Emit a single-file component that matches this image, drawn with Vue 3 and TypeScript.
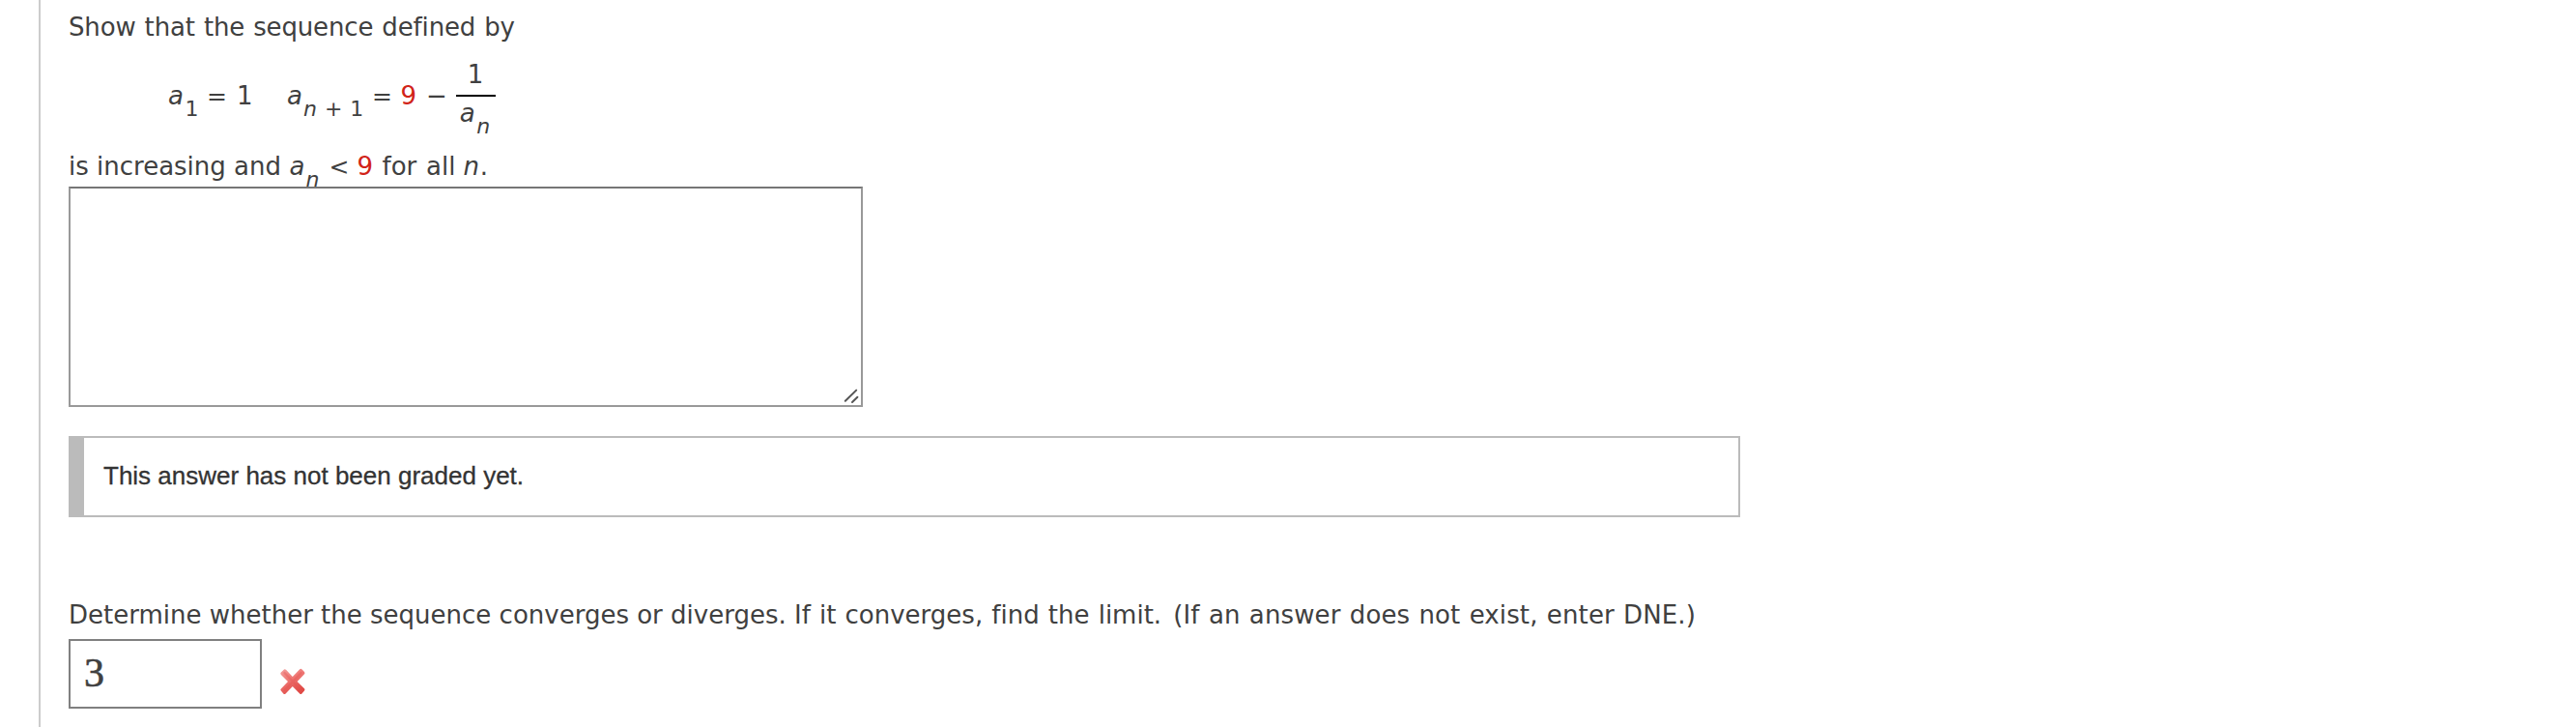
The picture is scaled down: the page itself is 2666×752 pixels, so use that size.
<script setup lang="ts">
import { ref } from 'vue'

interface Token {
  text: string
  width: number
  kind?: string
}

const recurrence: Token[] = [
  { text: 'a', width: 17.6, kind: 'variable' },
  { text: '1', width: 22.4, kind: 'subscript' },
  { text: '=', width: 31, kind: 'operator' },
  { text: '1', width: 52 },
  { text: 'a', width: 17, kind: 'variable' },
  { text: 'n', width: 22, kind: 'subscript variable' },
  { text: '+', width: 26.3, kind: 'subscript' },
  { text: '1', width: 22.7, kind: 'subscript' },
  { text: '=', width: 29.6, kind: 'operator' },
  { text: '9', width: 26.4, kind: 'value' },
  { text: '−', width: 31 },
]

const bound: Token[] = [
  { text: 'is increasing and', width: 228.5, kind: 'and' },
  { text: 'a', width: 17, kind: 'variable' },
  { text: 'n', width: 24, kind: 'subscript variable' },
  { text: '<', width: 29, kind: 'operator' },
  { text: '9', width: 26, kind: 'value' },
  { text: 'for', width: 45.5 },
  { text: 'all', width: 38.5 },
  { text: 'n', width: 17.3, kind: 'variable' },
  { text: '.', width: 10 },
]

const proof = ref('')
const limit = ref('3')
</script>

<template>
  <main class="question">
    <p class="line intro">Show that the sequence defined by</p>

    <div class="formula">
      <div class="line expression">
        <span v-for="(t, i) in recurrence" :key="i" class="token" :class="t.kind" :style="{ width: t.width + 'px' }">{{ t.text }}</span>
      </div>
      <div class="fraction">
        <div class="line numerator">1</div>
        <div class="line denominator">
          <span class="token variable base">a</span><span class="token subscript variable">n</span>
        </div>
      </div>
    </div>

    <div class="line bound">
      <span v-for="(t, i) in bound" :key="i" class="token" :class="t.kind" :style="{ width: t.width + 'px' }">{{ t.text }}</span>
    </div>

    <div class="essay">
      <textarea v-model="proof" class="essay-input" aria-label="Proof"></textarea>
      <svg class="grip" width="16" height="16" viewBox="0 0 16 16" aria-hidden="true">
        <path d="M1.8 12.8 L13.2 1.6 M9 14 L14.4 8.8" />
      </svg>
    </div>

    <div class="notice"><span>This answer has not been graded yet.</span></div>

    <p class="line prompt">Determine whether the sequence converges or diverges. <span class="find">If it converges, find the limit. </span><span class="hint">(If an answer does not exist, enter DNE.)</span></p>

    <div class="answer">
      <input v-model="limit" class="answer-input" aria-label="Limit" />
      <svg class="wrong" width="28" height="28" viewBox="0 0 28 28" role="img" aria-label="Incorrect">
        <defs>
          <linearGradient id="cross" x1="0" y1="0" x2="0.5" y2="1">
            <stop offset="0" stop-color="#f3a09e" />
            <stop offset="0.5" stop-color="#ee7673" />
            <stop offset="1" stop-color="#e04a46" />
          </linearGradient>
        </defs>
        <path
          d="M5 1.4 Q6 .8 7 1.8 L13.8 9 L21 1.4 Q22.4 .2 23.6 1.5 L26 4 Q27 5.2 26 6.2 L18.6 14 L26 21.3 Q27 22.4 26 23.5 L23.4 26.5 Q22.4 27.6 21.2 26.5 L13.8 19 L6.6 26.5 Q5.4 27.6 4.3 26.4 L1.8 23.6 Q.8 22.5 1.8 21.4 L9 14 L1.7 6.8 Q.8 5.7 1.8 4.6 Z"
          fill="url(#cross)"
        />
        <path d="M5.5 5 L22.5 22.8 M22.5 5 L5.5 22.8" stroke="#e5524f" stroke-width="2.4" stroke-linecap="round" opacity=".35" />
      </svg>
    </div>
  </main>
</template>

<style>
body {
  margin: 0;
  background: #fff;
}
</style>

<style scoped>
.question {
  box-sizing: border-box;
  height: 752px;
  margin-left: 40px;
  padding: 12px 0 0 29px;
  overflow: hidden;
  border-left: 2px solid #ccc;
  color: #404040;
  font-family: Verdana, 'DejaVu Sans', sans-serif;
  font-size: 26px;
  font-variant-ligatures: none;
}

.line {
  height: 32px;
  margin: 0;
  line-height: 32px;
  white-space: nowrap;
}

.intro {
  letter-spacing: -0.14px;
  word-spacing: 0.9px;
}

.formula {
  display: flex;
  height: 95px;
  margin-left: 103px;
  padding-top: 17px;
  box-sizing: border-box;
}

.expression {
  display: flex;
  align-items: baseline;
  padding-top: 22px;
}

.token {
  display: block;
  flex: none;
}

.variable {
  font-style: oblique;
}

.subscript {
  font-size: 22px;
  transform: translateY(12px);
}

.operator {
  font-size: 25px;
}

.value {
  color: #d12319;
}

.fraction {
  width: 41px;
}

.numerator {
  padding-left: 11.8px;
}

.denominator {
  display: flex;
  align-items: baseline;
  margin-top: 5px;
  padding-left: 3.8px;
  border-top: 2px solid #000;
  line-height: 34px;
}

.denominator .base {
  width: 17.4px;
}

.bound {
  display: flex;
  align-items: baseline;
  margin-top: 17px;
}

.essay {
  position: relative;
  width: 822px;
  height: 228px;
  margin-top: 5px;
}

.essay-input {
  display: block;
  box-sizing: border-box;
  width: 100%;
  height: 100%;
  border: 2px solid #999;
  border-top-color: #767676;
  border-radius: 0;
  outline: none;
  background: #fff;
  resize: none;
}

.grip {
  position: absolute;
  right: 4px;
  bottom: 3px;
  fill: none;
  stroke: #555;
  stroke-width: 2;
  stroke-linecap: round;
}

.notice {
  display: flex;
  align-items: center;
  box-sizing: border-box;
  width: 1730px;
  height: 84px;
  margin-top: 30px;
  padding: 0 0 2px 20px;
  border: 2px solid #bbb;
  border-left-width: 16px;
  color: #333;
  font-family: Helvetica, 'Liberation Sans', sans-serif;
  font-size: 26px;
  -webkit-text-stroke: 0.3px #333;
}

.prompt {
  margin-top: 85px;
}

.find {
  word-spacing: 0.9px;
}

.hint {
  margin-left: 3px;
  letter-spacing: 0.12px;
  word-spacing: 0.9px;
}

.answer {
  display: flex;
  align-items: flex-start;
  gap: 18px;
  margin-top: 9px;
}

.answer-input {
  box-sizing: border-box;
  width: 200px;
  height: 72px;
  padding: 0 0 2px 14px;
  border: 2px solid #808080;
  border-radius: 0;
  outline: none;
  background: #fff;
  color: #404040;
  font-family: 'Liberation Serif', serif;
  font-size: 42px;
  -webkit-text-stroke: 0.6px #404040;
}

.wrong {
  margin-top: 30px;
}
</style>
